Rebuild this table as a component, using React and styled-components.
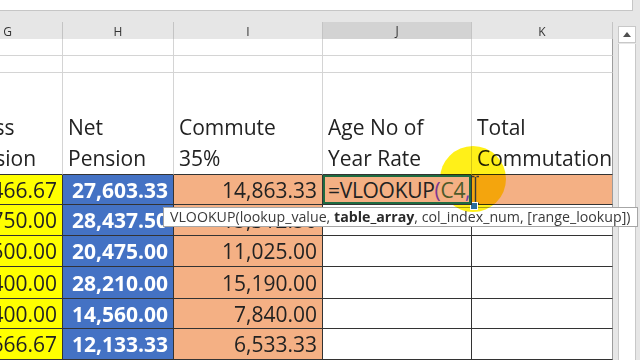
import React from "react";
import styled, { createGlobalStyle } from "styled-components";

const GlobalStyle = createGlobalStyle`
  html, body {
    margin: 0;
    padding: 0;
  }
  body {
    width: 640px;
    height: 360px;
    overflow: hidden;
    background: #e6e6e6;
    font-family: "Open Sans", "Liberation Sans", sans-serif;
  }
`;

const COLS = "110px 111px 149px 149px 141px";

const fills = {
  white: "#ffffff",
  yellow: "#ffff00",
  blue: "#4472c4",
  orange: "#f4b084",
};

const Window = styled.div`
  position: relative;
  width: 640px;
  height: 360px;
  overflow: hidden;
  display: flex;
  flex-direction: column;
`;

const FormulaStrip = styled.div`
  flex-shrink: 0;
  width: 632px;
  height: 10px;
  background: #fff;
  border-right: 1px solid #c6c6c6;
  border-bottom: 1px solid #c6c6c6;
`;

const Body = styled.div`
  display: flex;
  flex: 1;
  min-height: 0;
`;

const Sheet = styled.div`
  flex-shrink: 0;
  width: 613px;
  padding-top: 11px;
  overflow: hidden;
`;

const Row = styled.div`
  display: grid;
  grid-template-columns: ${COLS};
  height: ${(p) => p.$h}px;
  margin-left: -47px;
`;

const ColHead = styled.div`
  box-sizing: border-box;
  display: flex;
  align-items: center;
  justify-content: center;
  font-size: 12px;
  color: #333;
  background: ${(p) => (p.$sel ? "#d3d3d3" : "#e6e6e6")};
  border-right: 1px solid #c4c4c4;
  border-bottom: ${(p) => (p.$sel ? "2px solid #1e6b41" : "1px solid #b4b4b4")};
`;

const Cell = styled.div`
  box-sizing: border-box;
  position: relative;
  display: flex;
  flex-direction: column;
  justify-content: ${(p) => (p.$bottom ? "flex-end" : "center")};
  align-items: ${(p) => (p.$right ? "flex-end" : "flex-start")};
  padding: ${(p) => (p.$right ? "0 5px 0 0" : "0 0 0 5px")};
  background: ${(p) => fills[p.$fill || "white"]};
  border-right: 1px solid
    ${(p) => (p.$edge ? "#9c9c9c" : p.$dark ? "#333" : "#d4d4d4")};
  border-bottom: 1px solid ${(p) => (p.$dark || p.$darkBottom ? "#333" : "#d4d4d4")};
  box-shadow: ${(p) => (p.$active ? "inset 0 0 0 2px #1e6b41" : "none")};
  font-size: 21px;
  line-height: ${(p) => (p.$bottom ? "31px" : "normal")};
  font-weight: ${(p) => (p.$bold ? 700 : 400)};
  color: ${(p) => (p.$fill === "blue" ? "#ffffff" : "#222")};
  white-space: nowrap;
  overflow: ${(p) => (p.$active ? "visible" : "hidden")};
  z-index: ${(p) => (p.$active ? 1 : "auto")};
`;

const Formula = styled.span`
  letter-spacing: -0.3px;
`;

const Paren = styled.span`
  color: ${(p) => p.$c};
`;

const Tooltip = styled.div`
  position: absolute;
  left: 163px;
  top: 207px;
  width: 475px;
  height: 20px;
  box-sizing: border-box;
  padding-left: 6px;
  background: #fff;
  border: 1px solid #a6a6a6;
  font-size: 14.2px;
  line-height: 18px;
  color: #3a3a3a;
  white-space: nowrap;
  overflow: hidden;

  b {
    font-weight: 700;
    color: #2a2a2a;
  }
`;

const Highlight = styled.div`
  position: absolute;
  left: 440px;
  top: 146px;
  width: 66px;
  height: 66px;
  border-radius: 50%;
  background: rgba(255, 238, 0, 0.9);
  mix-blend-mode: multiply;
  pointer-events: none;
`;

const IBeam = styled.svg`
  position: absolute;
  left: 471px;
  top: 175px;
`;

const FillHandle = styled.div`
  position: absolute;
  left: 470px;
  top: 202px;
  width: 6px;
  height: 6px;
  background: #2b6d9e;
  border: 1px solid #fff;
`;

const ScrollCol = styled.div`
  display: flex;
  flex-direction: column;
  padding: 15px 4px 0 5px;
`;

const ScrollBtn = styled.div`
  box-sizing: border-box;
  width: 18px;
  height: 17px;
  display: flex;
  align-items: center;
  justify-content: center;
  background: #fff;
  border: 1px solid #c8c8c8;
`;

const Track = styled.div`
  flex: 1;
  box-sizing: border-box;
  width: 18px;
  margin-top: 1px;
  background: #fff;
  border-left: 1px solid #c8c8c8;
  border-right: 1px solid #c8c8c8;
`;

const letters = ["G", "H", "I", "J", "K"];

const headings = [
  ["Gross", "Pension"],
  ["Net", "Pension"],
  ["Commute", "35%"],
  ["Age No of", "Year Rate"],
  ["Total", "Commutation"],
];

const rows = [
  { h: 30, g: "42,466.67", n: "27,603.33", c: "14,863.33", current: true },
  { h: 31, g: "43,750.00", n: "28,437.50", c: "15,312.50" },
  { h: 31, g: "31,500.00", n: "20,475.00", c: "11,025.00" },
  { h: 32, g: "43,400.00", n: "28,210.00", c: "15,190.00" },
  { h: 30, g: "22,400.00", n: "14,560.00", c: "7,840.00" },
  { h: 31, g: "18,666.67", n: "12,133.33", c: "6,533.33" },
];

export default function App() {
  return (
    <>
      <GlobalStyle />
      <Window>
        <FormulaStrip />
        <Body>
          <Sheet>
            <Row $h={17}>
              {letters.map((l) => (
                <ColHead key={l} $sel={l === "J"}>
                  {l}
                </ColHead>
              ))}
            </Row>
            <Row $h={17}>
              {letters.map((l, i) => (
                <Cell key={l} $edge={i === 4} />
              ))}
            </Row>
            <Row $h={17}>
              {letters.map((l, i) => (
                <Cell key={l} $edge={i === 4} />
              ))}
            </Row>
            <Row $h={102}>
              {headings.map(([a, b], i) => (
                <Cell key={a} $bottom $darkBottom $edge={i === 4}>
                  <span>{a}</span>
                  <span>{b}</span>
                </Cell>
              ))}
            </Row>
            {rows.map((r) => (
              <Row $h={r.h} key={r.n}>
                <Cell $fill="yellow" $dark $right>
                  {r.g}
                </Cell>
                <Cell $fill="blue" $dark $right $bold>
                  {r.n}
                </Cell>
                <Cell $fill="orange" $dark $right>
                  {r.c}
                </Cell>
                {r.current ? (
                  <Cell $fill="orange" $dark $active>
                    <Formula>
                      =VLOOKUP<Paren $c="#7b3a92">(</Paren>
                      <Paren $c="#4d5a2a">C4</Paren>
                      <Paren $c="#6b3fa6">,</Paren>
                    </Formula>
                  </Cell>
                ) : (
                  <Cell $dark />
                )}
                <Cell $fill={r.current ? "orange" : "white"} $dark $edge />
              </Row>
            ))}
          </Sheet>
          <ScrollCol>
            <ScrollBtn>
              <svg width="8" height="5" viewBox="0 0 8 5">
                <polygon points="0,5 4,0 8,5" fill="#505050" />
              </svg>
            </ScrollBtn>
            <Track />
          </ScrollCol>
        </Body>

        <Tooltip>
          VLOOKUP(lookup_value, <b>table_array</b>, col_index_num, [range_lookup])
        </Tooltip>
        <Highlight />
        <IBeam width="9" height="30" viewBox="0 0 9 30">
          <path
            d="M1 1.5h2.5M5.5 1.5H8M4.5 2v26M1 28.5h2.5M5.5 28.5H8"
            stroke="#3a3a3a"
            strokeWidth="1.4"
            fill="none"
          />
        </IBeam>
        <FillHandle />
      </Window>
    </>
  );
}
